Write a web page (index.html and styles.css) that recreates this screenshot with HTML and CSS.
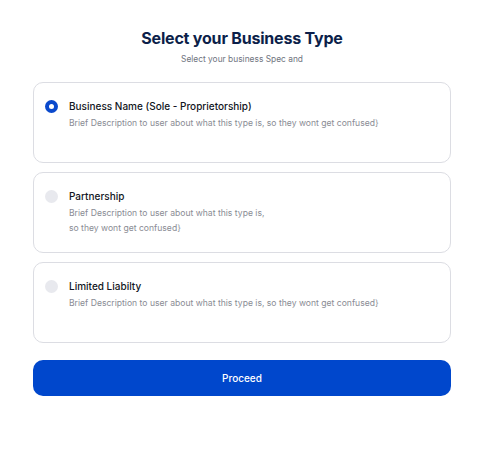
FILE: index.html
```html
<!DOCTYPE html>
<html>
<head>
<meta charset="utf-8">
<link rel="stylesheet" href="styles.css">
</head>
<body>
<main class="page">
  <h1 class="title">Select your Business Type</h1>
  <p class="subtitle">Select your business Spec and</p>
  <div class="options">
    <label class="card">
      <span class="radio checked"></span>
      <span class="text">
        <span class="name">Business Name (Sole - Proprietorship)</span>
        <span class="desc">Brief Description to user about what this type is, so they wont get confused}</span>
      </span>
    </label>
    <label class="card">
      <span class="radio"></span>
      <span class="text">
        <span class="name">Partnership</span>
        <span class="desc">Brief Description to user about what this type is,<br>so they wont get confused}</span>
      </span>
    </label>
    <label class="card">
      <span class="radio"></span>
      <span class="text">
        <span class="name">Limited Liabilty</span>
        <span class="desc">Brief Description to user about what this type is, so they wont get confused}</span>
      </span>
    </label>
  </div>
  <button class="proceed">Proceed</button>
</main>
</body>
</html>
```
FILE: styles.css
```css
* { box-sizing: border-box; }
html, body { margin: 0; padding: 0; background: #fff; }
body { font-family: Inter, "Noto Sans", sans-serif; }
.page {
  width: 488px;
  padding: 28px 37px 0 33px;
  display: flex;
  flex-direction: column;
}
.title {
  margin: 0;
  text-align: center;
  font-size: 16px;
  font-weight: 700;
  color: #0c1f4a;
  line-height: 20px;
  letter-spacing: -0.2px;
}
.subtitle {
  margin: 6px 0 0;
  text-align: center;
  font-size: 8.4px;
  color: #6f7480;
  line-height: 10px;
}
.options {
  margin-top: 18px;
  display: flex;
  flex-direction: column;
  gap: 9px;
}
.card {
  display: flex;
  align-items: flex-start;
  gap: 11px;
  height: 81px;
  padding: 17px 12px 0 11px;
  border: 1px solid #dcdde3;
  border-radius: 10px;
  background: #fff;
}
.radio {
  flex: none;
  width: 13px;
  height: 13px;
  border-radius: 50%;
  background: #e8e9ee;
  margin-top: 0;
}
.radio.checked {
  background: #0a49cc;
  position: relative;
}
.radio.checked::after {
  content: "";
  position: absolute;
  left: 4px; top: 4px;
  width: 5px; height: 5px;
  border-radius: 50%;
  background: #fff;
}
.text { display: flex; flex-direction: column; }
.name {
  font-size: 10px;
  line-height: 12px;
  color: #111522;
  font-weight: 500;
}
.desc {
  margin-top: 4px;
  font-size: 8.6px;
  line-height: 15px;
  color: #8a8c94;
}
.proceed {
  margin-top: 17px;
  height: 36px;
  border: none;
  border-radius: 10px;
  background: #0047cc;
  color: #fff;
  font-family: Inter, "Noto Sans", sans-serif;
  font-size: 10px;
  font-weight: 500;
}
```
